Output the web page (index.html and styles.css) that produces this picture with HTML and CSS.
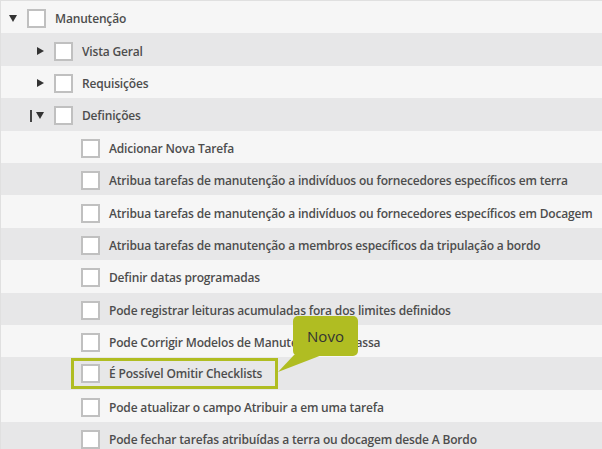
FILE: index.html
```html
<!DOCTYPE html>
<html lang="pt">
<head>
<meta charset="UTF-8">
<title>Permissões - Manutenção</title>
<link rel="stylesheet" href="styles.css">
</head>
<body>
<ul class="tree">
    <li class="row lvl-0">
        <span class="toggle open"></span>
        <span class="box"></span>
        <span class="label">Manutenção</span>
    </li>
    <li class="row lvl-1">
        <span class="toggle closed"></span>
        <span class="box"></span>
        <span class="label">Vista Geral</span>
    </li>
    <li class="row lvl-1">
        <span class="toggle closed"></span>
        <span class="box"></span>
        <span class="label">Requisições</span>
    </li>
    <li class="row lvl-1">
        <span class="toggle open"><i class="caret"></i></span>
        <span class="box"></span>
        <span class="label">Definições</span>
    </li>
    <li class="row lvl-2">
        <span class="toggle"></span>
        <span class="box"></span>
        <span class="label">Adicionar Nova Tarefa</span>
    </li>
    <li class="row lvl-2">
        <span class="toggle"></span>
        <span class="box"></span>
        <span class="label">Atribua tarefas de manutenção a indivíduos ou fornecedores específicos em terra</span>
    </li>
    <li class="row lvl-2">
        <span class="toggle"></span>
        <span class="box"></span>
        <span class="label">Atribua tarefas de manutenção a indivíduos ou fornecedores específicos em Docagem</span>
    </li>
    <li class="row lvl-2">
        <span class="toggle"></span>
        <span class="box"></span>
        <span class="label">Atribua tarefas de manutenção a membros específicos da tripulação a bordo</span>
    </li>
    <li class="row lvl-2">
        <span class="toggle"></span>
        <span class="box"></span>
        <span class="label">Definir datas programadas</span>
    </li>
    <li class="row lvl-2">
        <span class="toggle"></span>
        <span class="box"></span>
        <span class="label">Pode registrar leituras acumuladas fora dos limites definidos</span>
    </li>
    <li class="row lvl-2">
        <span class="toggle"></span>
        <span class="box"></span>
        <span class="label">Pode Corrigir Modelos de Manutenção da Classa</span>
    </li>
    <li class="row lvl-2">
        <span class="toggle"></span>
        <span class="callout">
            <span class="box"></span>
            <span class="label">É Possível Omitir Checklists</span>
            <span class="badge">Novo</span>
            <svg class="tail" width="46" height="20" viewBox="0 0 46 20">
                <polygon points="17,0 1,17 45,0" fill="#b0bd22"/>
            </svg>
        </span>
    </li>
    <li class="row lvl-2">
        <span class="toggle"></span>
        <span class="box"></span>
        <span class="label">Pode atualizar o campo Atribuir a em uma tarefa</span>
    </li>
    <li class="row lvl-2">
        <span class="toggle"></span>
        <span class="box"></span>
        <span class="label">Pode fechar tarefas atribuídas a terra ou docagem desde A Bordo</span>
    </li>
</ul>
</body>
</html>
```

FILE: styles.css
```css
:root {
    --row-light: #f6f6f6;
    --row-dark: #e7e7e8;
    --text-color: #4d4d4d;
    --box-border: #c0c0c0;
    --accent: #b0bd22;
}
body {
    margin: 0;
    font-family: 'Open Sans', sans-serif;
    background: #fff;
    overflow: hidden;
}
.tree {
    list-style: none;
    margin: 0;
    padding: 0;
    border-top: 1px solid #e0e0e0;
    border-left: 1px solid #e0e0e0;
}
.row {
    display: flex;
    align-items: center;
    box-sizing: border-box;
    height: 32.4px;
    padding-top: 3px;
    padding-left: 8px;
    background: var(--row-light);
    font-size: 12px;
    font-weight: 600;
    letter-spacing: -0.17px;
    color: var(--text-color);
    white-space: nowrap;
}
.row:nth-child(even) { background: var(--row-dark); }
.lvl-1 { padding-left: 35px; }
.lvl-2 { padding-left: 62px; }
.toggle {
    display: flex;
    align-items: center;
    width: 18px;
    height: 100%;
    flex: none;
}
.toggle.open::after, .toggle.closed::after {
    content: "";
    width: 0;
    height: 0;
}
.toggle.open::after {
    border-left: 4px solid transparent;
    border-right: 4px solid transparent;
    border-top: 7px solid #333;
}
.toggle.closed::after {
    border-top: 4px solid transparent;
    border-bottom: 4px solid transparent;
    border-left: 7px solid #333;
    margin-left: 1px;
}
.caret {
    display: block;
    width: 1.5px;
    height: 12px;
    background: #444;
    margin-left: -6px;
    margin-right: 4.5px;
}
.box {
    width: 15px;
    height: 15px;
    border: 2px solid var(--box-border);
    background: #fff;
    flex: none;
    margin-right: 9px;
}
.callout {
    position: relative;
    display: flex;
    align-items: center;
    height: 25px;
    margin-top: -3px;
    margin-left: -10px;
    padding: 0 13px 0 7px;
    border: 3px solid var(--accent);
}
.badge {
    position: absolute;
    left: 219px;
    top: -45px;
    width: 65px;
    height: 40px;
    padding-top: 10px;
    box-sizing: border-box;
    background: var(--accent);
    border-radius: 5px;
    text-align: center;
    font-size: 15px;
    font-weight: 400;
    letter-spacing: 0;
    line-height: 20px;
    color: #333;
}
.tail {
    position: absolute;
    left: 203px;
    top: -6px;
}
```
